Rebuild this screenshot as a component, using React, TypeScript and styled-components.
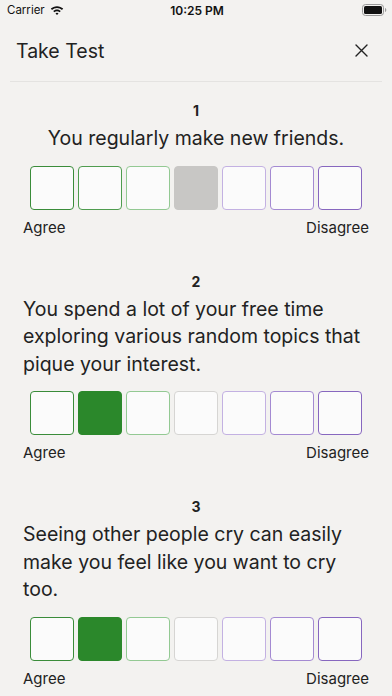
import React from "react";
import styled, { createGlobalStyle } from "styled-components";

const GlobalStyle = createGlobalStyle`
  html, body {
    margin: 0;
    padding: 0;
    background: #f3f2f0;
  }
  body {
    font-family: Inter, "Noto Sans", sans-serif;
    color: #222;
  }
`;

const questions = [
  { id: 1, text: "You regularly make new friends.", value: 3 },
  {
    id: 2,
    text: "You spend a lot of your free time exploring various random topics that pique your interest.",
    value: 1,
  },
  {
    id: 3,
    text: "Seeing other people cry can easily make you feel like you want to cry too.",
    value: 1,
  },
];

const borders = [
  "#3a8c3a",
  "#4f9c4f",
  "#93c993",
  "#d6d5d3",
  "#c3b1e2",
  "#a48ad2",
  "#8767bf",
];

const WifiIcon = () => (
  <svg width="14" height="11" viewBox="0 0 14 11">
    <path d="M7 1.2C4.6 1.2 2.4 2.1 0.8 3.6L2 4.9C3.3 3.7 5.1 2.9 7 2.9s3.7.8 5 2l1.2-1.3C11.6 2.1 9.4 1.2 7 1.2z" fill="#111" />
    <path d="M7 4.5c-1.5 0-2.8.6-3.8 1.5l1.2 1.3C5.1 6.6 6 6.2 7 6.2s1.9.4 2.6 1.1l1.2-1.3C9.8 5.1 8.5 4.5 7 4.5z" fill="#111" />
    <path d="M7 7.8c-.6 0-1.1.2-1.5.6L7 10l1.5-1.6C8.1 8 7.6 7.8 7 7.8z" fill="#111" />
  </svg>
);

const BatteryIcon = () => (
  <svg width="25" height="12" viewBox="0 0 25 12">
    <rect x="0.5" y="0.5" width="21" height="11" rx="3" fill="none" stroke="#999" />
    <rect x="2" y="2" width="18" height="8" rx="1.6" fill="#111" />
    <path d="M23 4v4c.8-.3 1.3-1 1.3-2s-.5-1.7-1.3-2z" fill="#999" />
  </svg>
);

const CloseIcon = () => (
  <svg width="13" height="13" viewBox="0 0 13 13">
    <path d="M1 1L12 12M12 1L1 12" stroke="#222" strokeWidth="1.4" strokeLinecap="round" />
  </svg>
);

export default function App() {
  return (
    <>
      <GlobalStyle />
      <Screen>
        <StatusBar>
          <Carrier>
            Carrier <WifiIcon />
          </Carrier>
          <Time>10:25 PM</Time>
          <Battery>
            <BatteryIcon />
          </Battery>
        </StatusBar>
        <Header>
          <Title>Take Test</Title>
          <CloseButton>
            <CloseIcon />
          </CloseButton>
        </Header>
        <Divider />
        <List>
          {questions.map((q) => (
            <Question key={q.id}>
              <Number>{q.id}</Number>
              <TextWrap>
                <QuestionText>{q.text}</QuestionText>
              </TextWrap>
              <Scale>
                {borders.map((color, i) => (
                  <Choice
                    key={i}
                    $border={color}
                    $selected={q.value === i}
                    $neutral={i === 3}
                  />
                ))}
              </Scale>
              <Labels>
                <span>Agree</span>
                <span>Disagree</span>
              </Labels>
            </Question>
          ))}
        </List>
      </Screen>
    </>
  );
}

const Screen = styled.div`
  width: 392px;
  height: 696px;
  overflow: hidden;
  background: #f3f2f0;
`;

const StatusBar = styled.div`
  height: 20px;
  display: flex;
  align-items: center;
  justify-content: space-between;
  padding: 0 5px 0 7px;
  font-size: 11.5px;
  color: #111;
`;

const Carrier = styled.div`
  display: flex;
  align-items: center;
  gap: 5px;
  width: 100px;
`;

const Time = styled.div`
  font-weight: 600;
  font-size: 12px;
`;

const Battery = styled.div`
  width: 100px;
  display: flex;
  justify-content: flex-end;
`;

const Header = styled.div`
  height: 61px;
  display: flex;
  align-items: center;
  justify-content: space-between;
  padding: 0 24px 0 16px;
`;

const Title = styled.h1`
  margin: 0;
  font-size: 19.5px;
  line-height: 24px;
  font-weight: 400;
  color: #222;
`;

const CloseButton = styled.div`
  display: flex;
  align-items: center;
`;

const Divider = styled.div`
  height: 1px;
  margin: 0 10px;
  background: #e4e3e1;
`;

const List = styled.div`
  display: flex;
  flex-direction: column;
  gap: 34px;
  padding-top: 19px;
`;

const Question = styled.div`
  display: flex;
  flex-direction: column;
  align-items: center;
  padding: 0 23px;
`;

const Number = styled.div`
  font-size: 14px;
  font-weight: 700;
  line-height: 20px;
  margin-bottom: 4px;
`;

const TextWrap = styled.div`
  width: 100%;
  display: flex;
  justify-content: center;
`;

const QuestionText = styled.p`
  margin: 0;
  font-size: 19.5px;
  line-height: 27.5px;
  text-align: left;
  color: #222;
`;

const Scale = styled.div`
  display: flex;
  gap: 4px;
  margin-top: 13px;
`;

const Choice = styled.div<{ $border: string; $selected: boolean; $neutral: boolean }>`
  box-sizing: border-box;
  width: 44px;
  height: 44px;
  border-radius: 4px;
  border: 1.5px solid ${(p) => p.$border};
  background: #fbfbfb;
  ${(p) =>
    p.$selected &&
    (p.$neutral
      ? `background: #c8c7c5; border-color: #c8c7c5;`
      : `background: #2b882b; border-color: #2b882b;`)}
`;

const Labels = styled.div`
  width: 100%;
  display: flex;
  justify-content: space-between;
  margin-top: 8px;
  font-size: 15px;
  line-height: 20px;
  color: #222;
`;
